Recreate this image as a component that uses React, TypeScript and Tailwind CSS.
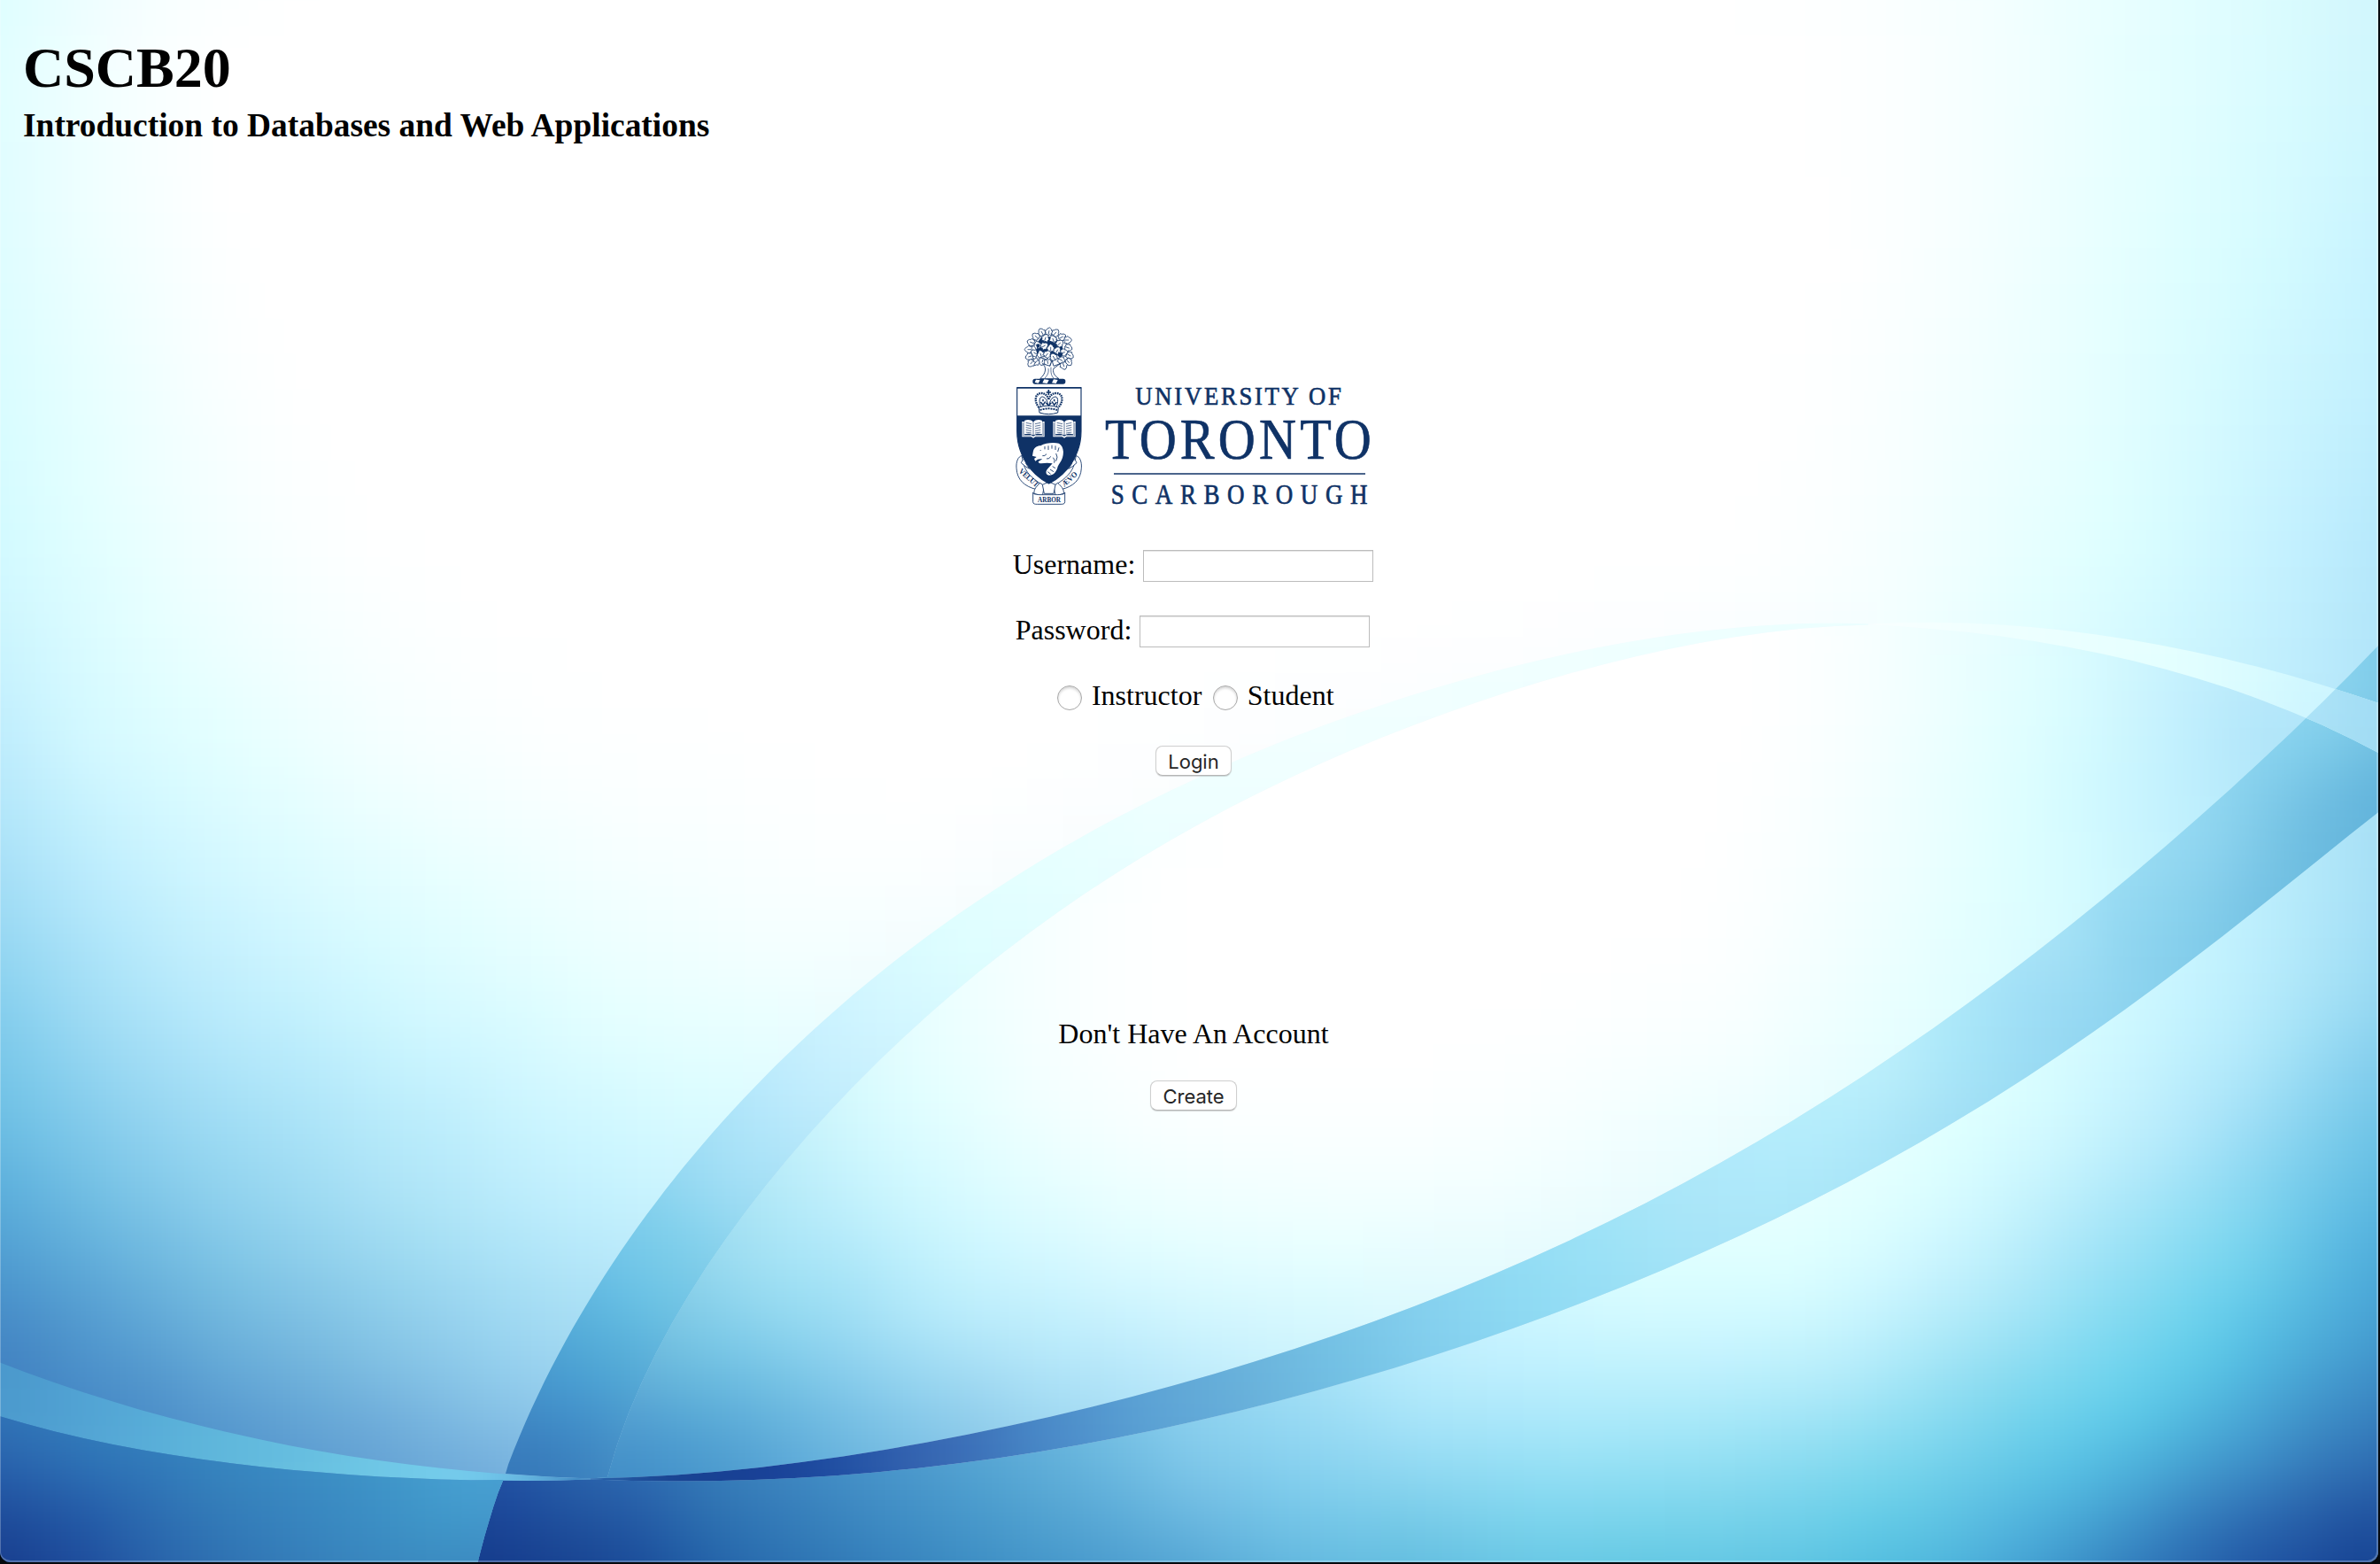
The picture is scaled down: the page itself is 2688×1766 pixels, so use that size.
import React from 'react';

type Pt = [number, number];
type Sample = [number, number, string];

const CELL = 40;

/* ---------- linear solver shared by the curve and colour fits ---------- */

function solve(m: number[][], rhs: number[][]): number[][] {
  const n = m.length;
  const width = rhs[0].length;
  for (let i = 0; i < n; i++) {
    let best = i;
    for (let r = i + 1; r < n; r++) if (Math.abs(m[r][i]) > Math.abs(m[best][i])) best = r;
    [m[i], m[best]] = [m[best], m[i]];
    [rhs[i], rhs[best]] = [rhs[best], rhs[i]];
    for (let r = 0; r < n; r++) {
      if (r === i) continue;
      const f = m[r][i] / m[i][i];
      if (!f) continue;
      for (let c = i; c < n; c++) m[r][c] -= f * m[i][c];
      for (let c = 0; c < width; c++) rhs[r][c] -= f * rhs[i][c];
    }
  }
  return rhs.map((r, i) => r.map((v) => v / m[i][i]));
}

/* Least-squares polynomial through the points, resampled evenly */
function fair(p: Pt[], degree: number, count = 48): Pt[] {
  const t = [0];
  for (let i = 1; i < p.length; i++) t.push(t[i - 1] + Math.hypot(p[i][0] - p[i - 1][0], p[i][1] - p[i - 1][1]));
  const u = t.map((v) => (2 * v) / t[t.length - 1] - 1);
  const n = degree + 1;
  const m = Array.from({ length: n }, () => Array(n).fill(0) as number[]);
  const rhs = Array.from({ length: n }, () => [0, 0]);
  p.forEach((q, k) => {
    const w = k === 0 || k === p.length - 1 ? 60 : 1;
    for (let i = 0; i < n; i++) {
      for (let j = 0; j < n; j++) m[i][j] += w * u[k] ** (i + j);
      rhs[i][0] += w * u[k] ** i * q[0];
      rhs[i][1] += w * u[k] ** i * q[1];
    }
  });
  const c = solve(m, rhs);
  return Array.from({ length: count + 1 }, (_, k) => {
    const v = (2 * k) / count - 1;
    return [c.reduce((s, a, i) => s + a[0] * v ** i, 0), c.reduce((s, a, i) => s + a[1] * v ** i, 0)] as Pt;
  });
}

/* ---------- curves shared by the wallpaper regions ---------- */

const arcOuter = fair(
  [
    [535, 1784], [540.5, 1764], [548, 1737], [558, 1703], [570.5, 1664], [590, 1613], [620, 1547], [650, 1493], [680, 1443], [727, 1375],
    [767, 1327], [807, 1278], [847, 1235], [882, 1200], [960, 1125], [1050, 1052], [1140, 990], [1240, 935], [1343, 886],
    [1430, 848], [1515, 813], [1601, 781], [1687, 756], [1773, 736], [1858, 722], [1944, 712], [2030, 706], [2110, 704.5],
  ],
  6,
  120,
);
const arcInner = fair(
  [
    [686, 1668], [690, 1657], [703, 1613], [723, 1563], [750, 1510], [783, 1453], [820, 1400], [860, 1347], [893, 1303],
    [940, 1252], [992, 1200], [1029, 1163], [1123, 1082], [1200, 1025], [1344, 937], [1473, 872], [1601, 817], [1730, 772],
    [1858, 738], [1987, 716], [2050, 709], [2110, 705.5],
  ],
  6,
);
const rightUpper = fair([[2110, 704.5], [2244, 705], [2330, 711], [2415, 724], [2501, 741], [2587, 763], [2690, 795]], 3, 16);
const rightLower = fair([[2110, 705.5], [2201, 711], [2287, 722], [2373, 739], [2458, 760], [2544, 786], [2612, 813], [2690, 852]], 3, 16);
const sweepUpper = fair(
  [
    [667, 1669.5], [790, 1662], [893, 1652], [1000, 1637], [1075, 1624], [1150, 1609], [1265, 1582], [1341, 1560], [1418, 1537],
    [1483, 1515], [1533, 1498], [1609, 1470], [1686, 1438], [1750, 1410], [1901, 1338], [2055, 1249], [2130, 1200], [2201, 1148],
    [2330, 1048], [2415, 979], [2501, 908], [2608, 811], [2655, 763], [2690, 725],
  ],
  6,
);
const sweepLower = fair(
  [
    [667, 1670.5], [733, 1673], [833, 1672], [1000, 1661], [1075, 1653], [1150, 1643], [1265, 1623], [1341, 1606], [1418, 1588],
    [1494, 1568], [1571, 1547], [1648, 1523], [1750, 1485], [1815, 1459], [1944, 1403], [2073, 1340], [2160, 1296], [2240, 1249],
    [2373, 1160], [2458, 1096], [2544, 1029], [2630, 963], [2690, 914],
  ],
  6,
);
const tailUpper = fair([[-4, 1537], [86, 1570], [171, 1595], [257, 1617], [343, 1635], [429, 1650], [500, 1658], [571, 1664], [667, 1669.5]], 4, 20);
const tailLower = fair([[-4, 1598], [86, 1622], [171, 1639], [257, 1652], [343, 1661], [429, 1667], [514, 1671], [600, 1672], [667, 1670.5]], 4, 20);

const rev = (p: Pt[]): Pt[] => [...p].reverse();
const outline = (...parts: Pt[][]) => `M${parts.flat().map(([x, y]) => `${x.toFixed(1)} ${y.toFixed(1)}`).join(' L')} Z`;

/* ---------- smooth colour fields ---------- */

function field(samples: Sample[], smooth: number) {
  const n = samples.length;
  const m = samples.map((a, i) => [...samples.map((b, j) => (i === j ? -smooth : Math.hypot(a[0] - b[0], a[1] - b[1]))), 1]);
  m.push([...samples.map(() => 1), 0]);
  const rhs = samples.map((s) => [1, 3, 5].map((k) => parseInt(s[2].slice(k, k + 2), 16)));
  rhs.push([0, 0, 0]);
  const w = solve(m, rhs);
  return (x: number, y: number) => {
    const c = [...w[n]];
    for (let i = 0; i < n; i++) {
      const r = Math.hypot(x - samples[i][0], y - samples[i][1]);
      for (let k = 0; k < 3; k++) c[k] += w[i][k] * r;
    }
    return `rgb(${c.map((v) => Math.max(0, Math.min(255, Math.round(v)))).join(',')})`;
  };
}

type Region = {
  id: string;
  path: string;
  within?: string;
  box: [number, number, number, number];
  samples: Sample[];
  smooth: number;
};

const gleam = outline(rightUpper, rev(rightLower));

const regions: Region[] = [
  {
    id: 'sky',
    path: 'M0 0H2688V1766H0Z',
    box: [0, 0, 2688, 1700],
    smooth: 30,
    samples: [
      [0, 0, '#dcfdff'], [60, 60, '#ebffff'], [150, 60, '#f8feff'], [260, 60, '#ffffff'], [0, 200, '#dffdff'], [100, 250, '#efffff'],
      [240, 250, '#feffff'], [0, 400, '#dafdff'], [100, 400, '#e8ffff'], [250, 400, '#fbffff'], [0, 600, '#d3fbff'], [100, 600, '#e2ffff'],
      [250, 600, '#f5ffff'], [400, 600, '#feffff'], [600, 500, '#ffffff'], [800, 200, '#ffffff'], [1300, 100, '#ffffff'], [1300, 500, '#ffffff'],
      [1800, 100, '#ffffff'], [1800, 500, '#ffffff'], [900, 800, '#ffffff'], [1344, 800, '#ffffff'], [1600, 700, '#ffffff'], [1800, 650, '#ffffff'],
      [1150, 850, '#ffffff'], [1100, 700, '#ffffff'], [1400, 650, '#ffffff'], [700, 700, '#ffffff'], [1600, 300, '#ffffff'], [1950, 650, '#feffff'],
      [0, 850, '#bcebfd'], [100, 850, '#d3f9ff'], [250, 850, '#e2ffff'], [450, 850, '#f5ffff'], [650, 850, '#fdffff'],
      [0, 1000, '#a2dcf5'], [100, 1000, '#b9ebfd'], [250, 1000, '#d0f6ff'], [500, 1000, '#e6ffff'], [800, 950, '#f9ffff'], [1000, 950, '#feffff'],
      [0, 1150, '#80ccec'], [100, 1150, '#a0dcf4'], [250, 1150, '#baebfc'], [450, 1150, '#d0f8ff'], [700, 1150, '#e6ffff'], [900, 1080, '#f4ffff'],
      [0, 1250, '#70c2e6'], [150, 1250, '#93d4f0'], [340, 1250, '#ace4f8'], [510, 1250, '#c0effd'], [690, 1250, '#d3f9ff'], [820, 1240, '#dcfdff'],
      [0, 1350, '#5aaedb'], [100, 1350, '#72bfe4'], [250, 1350, '#90d2ee'], [430, 1350, '#ace2f6'], [600, 1350, '#bfeefd'], [720, 1350, '#c8f3ff'],
      [0, 1450, '#4a96cc'], [100, 1450, '#5ba6d6'], [250, 1450, '#78c0e2'], [430, 1450, '#92d2ec'], [600, 1450, '#a8e0f5'],
      [0, 1530, '#427fc0'], [100, 1530, '#4f95cd'], [250, 1540, '#66abd8'], [430, 1550, '#80bfe3'], [600, 1550, '#98d2ef'],
      [170, 1580, '#4d8fc8'], [300, 1610, '#5b9cd0'], [430, 1620, '#69a7d6'], [550, 1600, '#85c1e6'], [560, 1650, '#72addb'],
      [2100, 60, '#feffff'], [2240, 80, '#f5ffff'], [2400, 80, '#e6ffff'], [2570, 80, '#dafcff'], [2680, 30, '#d0f6fc'],
      [2100, 300, '#feffff'], [2250, 300, '#f3ffff'], [2400, 300, '#e4ffff'], [2570, 300, '#d4fbff'], [2687, 300, '#c6f2ff'],
      [2050, 600, '#fcffff'], [2250, 600, '#ebffff'], [2400, 600, '#deffff'], [2500, 600, '#d0f8ff'], [2600, 600, '#c3f0ff'], [2687, 600, '#b5e8fb'],
      [2150, 690, '#f4ffff'], [2300, 690, '#e2ffff'], [2450, 700, '#d0f8ff'], [2600, 700, '#c0eefe'], [2687, 720, '#b0e4f8'],
    ],
  },
  {
    id: 'depth',
    path: outline(rev(arcOuter.filter((q) => q[1] >= 1673)).reverse(), [[568.5, 1671]], tailLower.filter((q) => q[0] > 575), sweepLower, [[2690, 1784]]),
    box: [520, 900, 2688, 1766],
    smooth: 45,
    samples: [
      [580, 1690, '#1c4ca3'], [560, 1760, '#163a88'], [650, 1760, '#1a4390'], [650, 1685, '#2862a9'], [720, 1700, '#265fab'], [720, 1760, '#1a4a98'],
      [800, 1690, '#3379b5'], [800, 1750, '#2566ab'], [950, 1690, '#3f8cc4'], [950, 1755, '#337ab8'], [1100, 1680, '#4da0d0'], [1100, 1755, '#4090c5'],
      [1250, 1650, '#6bb9df'], [1250, 1700, '#5eaeda'], [1250, 1760, '#4c9dce'], [1344, 1630, '#88ceed'], [1344, 1700, '#72bee4'], [1344, 1760, '#56a6d4'],
      [1601, 1583, '#b2e9fb'], [1515, 1617, '#98daf3'], [1601, 1650, '#95dbf4'], [1473, 1700, '#7acbec'], [1730, 1700, '#80d8f0'], [1601, 1750, '#65c0e0'],
      [1858, 1750, '#66cce4'], [2115, 1733, '#5bc9e5'], [2201, 1760, '#52b8de'], [2287, 1750, '#4aa8d8'], [2373, 1750, '#3b8cc5'], [2458, 1743, '#2f70b5'],
      [2544, 1743, '#2357a6'], [2664, 1750, '#17408f'], [2664, 1700, '#2458a5'], [2544, 1700, '#3478b9'], [2415, 1700, '#45a0d2'], [2330, 1667, '#55c4e5'],
      [2664, 1650, '#3373b6'], [2544, 1633, '#449cd0'], [2415, 1600, '#5acbe9'], [2664, 1567, '#4090c8'], [2664, 1500, '#48a5d5'], [2527, 1500, '#5cc5e8'],
      [2493, 1533, '#5ccce9'], [2664, 1417, '#50b0de'], [2544, 1433, '#70d3ec'], [2664, 1333, '#65c0e4'], [2664, 1267, '#75c9ea'], [2458, 1283, '#b5e9fb'],
      [2544, 1283, '#98daf4'], [2330, 1283, '#d0f8ff'], [2373, 1383, '#a8e4f8'], [2201, 1350, '#d8fdff'], [2201, 1417, '#caf4ff'], [2073, 1383, '#e2ffff'],
      [2030, 1450, '#daffff'], [1858, 1483, '#d5fbff'], [2115, 1483, '#c8f4ff'], [2287, 1483, '#a5e4f7'], [2415, 1467, '#84d9f0'], [1944, 1533, '#c5f2ff'],
      [1687, 1533, '#c3f0fe'], [1773, 1583, '#b3ebfc'], [2073, 1567, '#b2eaf9'], [2244, 1550, '#90dcf0'], [2287, 1600, '#72d3ec'], [2030, 1633, '#92def3'],
      [1773, 1650, '#9ae1f6'], [2115, 1683, '#70d3ea'], [1858, 1700, '#80d8ef'], [2664, 952, '#a8e0f6'], [2664, 1015, '#aae2f7'], [2587, 1056, '#b5eafb'],
      [2664, 1118, '#a0def5'], [2544, 1118, '#bbeefc'], [2458, 1139, '#c5f3ff'], [2664, 1222, '#80cdec'], [2544, 1201, '#b0e8fa'], [2373, 1222, '#cdf7ff'],
      [2260, 1260, '#d8fdff'],
    ],
  },
  {
    id: 'lens',
    path: outline(arcInner, rightLower.filter((q) => q[0] <= 2608), [[2614, 814]], rev(sweepUpper.filter((q) => q[0] <= 2609))),
    box: [660, 700, 2640, 1680],
    smooth: 55,
    samples: [
      [1344, 1250, '#feffff'], [1600, 1250, '#feffff'], [1900, 1250, '#f0ffff'], [1344, 1417, '#e4ffff'], [1500, 1417, '#eaffff'], [1700, 1350, '#f2ffff'],
      [1344, 1500, '#cdf4ff'], [1344, 1545, '#bdebfb'], [1500, 1470, '#d8fbff'], [1200, 1250, '#f5ffff'], [1100, 1250, '#e8ffff'], [986, 1283, '#d5fbff'],
      [1114, 1383, '#d5f9ff'], [1286, 1383, '#e8ffff'], [943, 1383, '#b9ecfc'], [857, 1450, '#9fdff3'], [1029, 1483, '#b4eafb'], [1200, 1517, '#bdedfd'],
      [814, 1517, '#7ccbe8'], [943, 1550, '#88cdec'], [1060, 1560, '#9cd8f2'], [767, 1533, '#70c2e0'], [833, 1567, '#68b9de'], [900, 1600, '#68b6de'],
      [986, 1617, '#74bde3'], [900, 1500, '#90d8f0'], [967, 1433, '#a9e5f7'], [750, 1560, '#66b6dc'], [720, 1600, '#539fd2'], [800, 1610, '#55a7d6'],
      [733, 1633, '#4695cb'], [823, 1650, '#4c99cd'], [690, 1663, '#3f88c3'], [1023, 1190, '#e4ffff'], [1200, 1060, '#f8ffff'], [1344, 960, '#feffff'],
      [1100, 1600, '#8fcae9'], [1250, 1560, '#aee2f7'], [1180, 1440, '#cdf6ff'], [1090, 1480, '#bdeffc'],
      [1200, 1170, '#f8ffff'], [1500, 1000, '#ffffff'], [1800, 800, '#ffffff'], [1850, 1000, '#ffffff'], [1600, 1150, '#ffffff'], [1344, 1120, '#ffffff'],
      [2000, 730, '#ffffff'], [2070, 724, '#fcffff'], [2158, 766, '#f2ffff'], [2330, 766, '#ddffff'], [2458, 787, '#c5f1fe'], [2544, 820, '#b2e6fa'],
      [2560, 849, '#aee3f8'], [2158, 890, '#eeffff'], [2330, 890, '#d5fcff'], [2441, 911, '#c3f2ff'], [2073, 1015, '#f5ffff'], [2244, 1015, '#e2ffff'],
      [2330, 1015, '#d8fdff'], [1944, 1097, '#fdffff'], [2158, 1097, '#e8ffff'], [2115, 1180, '#e8ffff'], [1944, 1180, '#f8ffff'], [1980, 900, '#feffff'],
    ],
  },
  {
    id: 'arc',
    path: outline(arcOuter.filter((q) => q[1] <= 1663), rev(arcInner), [[667, 1669.5], [620, 1667.5], [571, 1664]]),
    box: [560, 690, 2120, 1680],
    smooth: 5,
    samples: [
      [2030, 710, '#ecffff'], [1770, 750, '#f0ffff'], [1600, 800, '#f1ffff'], [1430, 870, '#f0ffff'], [1344, 910, '#eeffff'], [1200, 990, '#e6ffff'],
      [1080, 1080, '#defeff'], [1000, 1150, '#d2f6ff'], [940, 1200, '#c8f0fe'], [890, 1250, '#bbeafc'], [850, 1290, '#ade4f9'], [820, 1330, '#a2def5'],
      [800, 1365, '#94d9f2'], [775, 1400, '#80cfeb'], [740, 1410, '#78cbe9'], [707, 1450, '#6cc3e8'], [745, 1460, '#70c6e6'], [700, 1500, '#5cb4dc'],
      [667, 1533, '#50a9d6'], [650, 1583, '#4596cf'], [617, 1617, '#3f88c4'], [600, 1650, '#3576b8'], [667, 1650, '#3d85c0'],
    ],
  },
  {
    id: 'sweep',
    path: outline(sweepUpper, rev(sweepLower)),
    box: [660, 720, 2688, 1680],
    smooth: 5,
    samples: [
      [680, 1670, '#2a66ae'], [740, 1668, '#18428f'], [860, 1664, '#173d94'], [950, 1655, '#2050a4'], [1030, 1642, '#3563b0'], [1100, 1632, '#3c70b9'],
      [1160, 1625, '#4685c5'], [1290, 1595, '#5ba2d5'], [1400, 1567, '#68b0da'], [1515, 1530, '#74c2e5'], [1600, 1500, '#83ceed'], [1700, 1460, '#8edaf3'],
      [1800, 1420, '#9ae1f6'], [1900, 1380, '#a9e5f8'], [2000, 1310, '#b2ebfb'], [2100, 1250, '#b5edfb'], [2170, 1270, '#a5e2f6'], [2200, 1180, '#abe8f9'],
      [2130, 1200, '#bff0fc'], [2300, 1120, '#9ddcf5'], [2400, 1060, '#8fd6f0'], [2330, 1070, '#a8e3f7'], [2500, 960, '#90d5f0'], [2540, 1010, '#78c5e5'],
      [2600, 930, '#70bfe2'], [2600, 840, '#84d0ed'], [2640, 860, '#76c5e5'], [2680, 890, '#62b3db'], [2680, 750, '#80cdea'], [2660, 775, '#8bd3ee'],
    ],
  },
  {
    id: 'tail',
    path: outline(tailUpper, rev(tailLower)),
    box: [0, 1530, 690, 1680],
    smooth: 2,
    samples: [
      [0, 1570, '#4a98cc'], [100, 1600, '#52a4d4'], [171, 1620, '#58add8'], [250, 1640, '#60b8dc'], [343, 1650, '#66bfe0'], [430, 1662, '#70c8e6'],
      [530, 1668, '#78cfef'], [610, 1670, '#62b2de'], [670, 1670, '#3478b8'],
    ],
  },
  {
    id: 'pool',
    path: outline(tailLower.filter((q) => q[0] <= 565), [[568.5, 1671]], rev(arcOuter.filter((q) => q[1] >= 1673)), [[-4, 1784]]),
    box: [0, 1590, 580, 1766],
    smooth: 5,
    samples: [
      [0, 1620, '#2f70b5'], [100, 1640, '#3078b8'], [257, 1665, '#3684be'], [400, 1675, '#3d90c5'], [540, 1680, '#48a0d2'], [0, 1680, '#2357a6'],
      [0, 1760, '#173c8c'], [100, 1700, '#265fab'], [100, 1760, '#1f4f9e'], [200, 1740, '#2d6db0'], [350, 1740, '#3783bd'], [500, 1720, '#3f98c9'],
      [530, 1760, '#3c8ac0'],
    ],
  },
  {
    id: 'gleam',
    path: gleam,
    box: [2100, 700, 2688, 860],
    smooth: 2,
    samples: [[2150, 707, '#f8ffff'], [2230, 709, '#f0ffff'], [2330, 725, '#eaffff'], [2458, 745, '#e4ffff'], [2550, 775, '#d8fbff'], [2610, 800, '#ccf5ff']],
  },
  {
    id: 'cross',
    path: gleam,
    within: 'sweep',
    box: [2600, 740, 2688, 860],
    smooth: 2,
    samples: [[2620, 800, '#ade3f7'], [2650, 805, '#a5def5'], [2680, 830, '#a0dbf3']],
  },
];

// The painted fields depend only on constants, so they are built once.
const painted = regions.map((r) => {
  const at = field(r.samples, r.smooth);
  const cells: { x: number; y: number; fill: string }[] = [];
  for (let y = r.box[1] - 2 * CELL; y < r.box[3] + 2 * CELL; y += CELL)
    for (let x = r.box[0] - 2 * CELL; x < r.box[2] + 2 * CELL; x += CELL)
      cells.push({ x, y, fill: at(x + CELL / 2, y + CELL / 2) });
  return { ...r, cells };
});

function Wallpaper() {
  return (
    <svg className="absolute inset-0" width="2686" height="1764" viewBox="0 0 2686 1764" aria-hidden="true">
      <defs>
        <filter id="melt" filterUnits="userSpaceOnUse" x="-60" y="-60" width="2810" height="1890" colorInterpolationFilters="sRGB">
          <feGaussianBlur stdDeviation="20" />
        </filter>
        {painted.map((r) => (
          <clipPath id={`clip-${r.id}`} key={r.id} clipPath={r.within && `url(#clip-${r.within})`}>
            <path d={r.path} />
          </clipPath>
        ))}
      </defs>
      {painted.map((r) => (
        <g key={r.id} clipPath={`url(#clip-${r.id})`}>
          <g filter="url(#melt)">
            {r.cells.map((c) => (
              <rect key={`${c.x}-${c.y}`} x={c.x} y={c.y} width={CELL + 1} height={CELL + 1} fill={c.fill} />
            ))}
          </g>
        </g>
      ))}
    </svg>
  );
}

/* ---------- crest ---------- */

const NAVY = '#0f3266';

const leaves: [number, number, number][] = [
  [110, 46, -30], [134, 44, 10], [156, 48, 40], [90, 60, -50], [178, 62, 60], [197, 72, 90], [74, 80, -70], [122, 66, 20],
  [148, 70, -20], [170, 84, 50], [199, 98, 110], [96, 90, -20], [66, 104, -90], [118, 92, 60], [184, 114, 80], [204, 124, 120],
  [86, 116, -60], [68, 128, -110], [140, 100, 0], [162, 108, 30], [106, 120, -20], [128, 120, 40], [150, 130, -30], [176, 140, 120],
  [200, 146, 140], [90, 146, -130], [112, 144, -160], [130, 148, 170], [184, 158, 160], [74, 150, -140],
];

function Leaf({ x, y, turn }: { x: number; y: number; turn: number }) {
  return (
    <path
      transform={`translate(${x} ${y}) rotate(${turn}) scale(1.12)`}
      d="M0 11 L-4 8 L-9 10 L-9 4 L-12 -1 L-8 -4 L-6 -9 L0 -13 L6 -9 L8 -4 L12 -1 L9 4 L9 10 L4 8 Z M0 8 V-4"
      fill="#fff"
      stroke={NAVY}
      strokeWidth="2"
      strokeLinejoin="round"
    />
  );
}

function Book({ x }: { x: number }) {
  return (
    <g transform={`translate(${x} 340)`}>
      <path d="M1 8 H8 V54 H32 L39 58 L46 54 H70 V8 H77 V60 H45 L39 64 L33 60 H1 Z" fill="#fff" />
      <path d="M9 5 C20 0 32 2 38 9 V54 C30 49 20 48 9 51 Z M69 5 C58 0 46 2 40 9 V54 C48 49 58 48 69 51 Z" fill="#fff" />
      <path
        d="M14 12 L33 16 M14 20 L33 24 M14 28 L33 32 M14 36 L33 40 M14 44 L33 47 M64 12 L45 16 M64 20 L45 24 M64 28 L45 32 M64 36 L45 40 M64 44 L45 47"
        stroke={NAVY}
        strokeWidth="2"
        fill="none"
      />
      <path d="M4 12 V56 H31 M74 12 V56 H47" stroke={NAVY} strokeWidth="1.4" fill="none" />
    </g>
  );
}

function Crest() {
  return (
    <g transform="translate(30 30)">
      {/* oak */}
      <path d="M108 62 L148 60 L180 84 L180 118 L150 128 L110 126 L92 112 L90 88 Z" fill={NAVY} />
      {leaves.map(([x, y, turn]) => (
        <Leaf key={`${x}-${y}`} x={x} y={y} turn={turn} />
      ))}
      <path d="M90 88 l10 -4 l4 10 l-10 6 Z M136 74 l14 4 l-8 10 Z M166 112 l16 6 l-8 14 l-10 -6 Z M90 104 l12 6 l-8 10 Z" fill={NAVY} />
      <path
        d="M112 152 C126 162 126 184 104 203 H168 C150 192 146 178 150 168 L172 152 L150 160 L144 140 L138 160 Z"
        fill="#fff"
        stroke={NAVY}
        strokeWidth="2.6"
      />
      <path d="M132 168 C134 182 130 190 120 201 M141 164 C140 184 142 192 150 201" stroke={NAVY} strokeWidth="2" fill="none" />
      {/* wreath */}
      <rect x="79" y="203" width="111" height="18" rx="8" fill={NAVY} />
      <path d="M90 206 L104 208 L98 218 L86 215 Z M118 205 L134 207 L128 219 L112 217 Z M150 205 L164 207 L158 219 L144 217 Z" fill="#fff" />
      {/* scroll */}
      <g fill="#fff" stroke={NAVY} strokeWidth="2.6" strokeLinejoin="round">
        <path d="M42 464 C30 466 22 484 24 506 C26 546 52 568 92 578 L102 592 L108 560 C76 540 56 520 48 492 Z" />
        <path d="M40 488 C44 476 54 470 62 474 L56 490 L68 508 L54 500 Z" />
        <path d="M226 464 C238 466 246 484 244 506 C242 546 216 568 176 578 L166 592 L160 560 C192 540 212 520 220 492 Z" />
        <path d="M228 488 C224 476 214 470 206 474 L212 490 L200 508 L214 500 Z" />
        <path d="M104 556 C94 566 82 576 84 592 L112 600 L118 566 Z" />
        <path d="M164 556 C174 566 186 576 184 592 L156 600 L150 566 Z" />
        <path d="M112 562 L118 592 H150 L156 562 L134 552 Z" />
        <path d="M80 588 C80 594 90 596 112 596 H156 C178 596 188 594 188 588 V620 C188 628 180 628 174 628 H94 C88 628 80 628 80 620 Z" />
      </g>
      <g fill={NAVY} fontFamily="'Liberation Serif', serif" fontWeight="bold">
        <text x="96" y="622" fontSize="25" textLength="78" lengthAdjust="spacingAndGlyphs">ARBOR</text>
        <text transform="translate(31 518) rotate(42)" fontSize="26" textLength="80" lengthAdjust="spacingAndGlyphs">VELUT</text>
        <text transform="translate(186 570) rotate(-42)" fontSize="26" textLength="62" lengthAdjust="spacingAndGlyphs">ÆVO</text>
      </g>
      {/* shield */}
      <path d="M26 234 H243 V380 C243 456 200 524 134 558 C68 524 26 456 26 380 Z" fill="#fff" stroke={NAVY} strokeWidth="3.4" />
      <path d="M25 233 H244" stroke={NAVY} strokeWidth="4.5" />
      <path d="M26 328 H243 V380 C243 456 200 524 134 558 C68 524 26 456 26 380 Z" fill={NAVY} />
      {/* crown */}
      <g stroke={NAVY} strokeWidth="3" fill="none">
        <path d="M100 300 C82 278 88 252 108 252 C122 252 130 262 133 274 C136 262 144 252 160 252 C180 252 186 278 166 300" strokeDasharray="5 2.5" strokeWidth="7" />
        <path d="M108 300 C98 280 102 264 112 264 C124 266 130 280 131 296 M158 300 C168 280 164 264 156 264 C142 266 136 280 135 296" />
        <path d="M133 240 V258 M125 249 H141" strokeWidth="5" />
        <path d="M100 300 Q133 288 166 300 L164 318 Q133 328 102 318 Z" fill="#fff" />
        <path d="M104 309 Q133 299 162 309" strokeDasharray="6 3" strokeWidth="6" />
        <path d="M106 282 l8 10 l8 -12 M144 280 l8 12 l8 -10 M124 284 l9 10 l9 -10 M114 272 v8 M152 272 v8" strokeWidth="4.5" />
      </g>
      <Book x={42} />
      <Book x={147} />
      {/* beaver */}
      <path
        d="M80 452 C82 438 92 430 106 430 C122 420 150 418 168 422 C182 430 186 450 180 470 C176 484 168 490 164 500 C160 518 150 530 134 530 C122 528 122 516 130 508 L146 490 L128 488 L108 490 C98 490 94 484 104 480 L112 474 L96 476 L88 482 L84 474 L92 468 L78 464 Z"
        fill="#fff"
      />
      <path
        d="M104 444 l3 3 M120 432 v10 M132 430 v14 M144 428 v12 M156 430 v14 M168 436 l-4 14 M112 464 q8 2 14 -6 M126 474 q10 2 14 -8 M148 470 q8 8 4 18 M138 510 l12 8 M130 518 l10 8 M146 500 l10 6 M158 456 q8 12 0 26"
        stroke={NAVY}
        strokeWidth="2.6"
        fill="none"
      />
    </g>
  );
}

function Logo() {
  return (
    <svg
      className="mt-[186px] h-[240px] w-[412px] shrink-0 overflow-visible"
      viewBox="36 0 1236 720"
      role="img"
      aria-label="University of Toronto Scarborough"
    >
      <Crest />
      <g fill={NAVY} stroke={NAVY} fontFamily="'Liberation Serif', serif">
        <text transform="translate(457 320) scale(.92 1)" fontSize="87" strokeWidth="2" textLength="758" lengthAdjust="spacing">UNIVERSITY OF</text>
        <text transform="translate(354 503) scale(.9 1)" fontSize="194" strokeWidth="2" textLength="1003" lengthAdjust="spacing">TORONTO</text>
        <text transform="translate(374 656) scale(.88 1)" fontSize="92" strokeWidth="2" textLength="988" lengthAdjust="spacing">SCARBOROUGH</text>
      </g>
      <path d="M384 555 H1236" stroke={NAVY} strokeWidth="4.5" />
    </svg>
  );
}

function Field({ label, type, className }: { label: string; type: string; className: string }) {
  return (
    <div className={`flex h-[38px] items-start ${className}`}>
      <label className="pr-[7px] pl-px text-[32px] leading-[36px]">{label}</label>
      <input
        type={type}
        aria-label={label}
        className="mx-[2px] mt-[2px] h-9 w-[260px] rounded-none border border-[#bcbcbc] bg-white shadow-[inset_0_2px_1px_-1px_#e4e4e4] outline-none"
      />
    </div>
  );
}

function Radio({ label }: { label: string }) {
  return (
    <label className="flex items-start text-[32px] leading-[36px]">
      <span className="mt-[7px] mr-[10.5px] size-7 rounded-full border border-[#a8a8a8] bg-white shadow-[inset_0_2px_3px_#d4d4d4]" />
      {label}
    </label>
  );
}

function PushButton({ label, className }: { label: string; className: string }) {
  return (
    <button
      type="button"
      className={`${className} h-[34px] shrink-0 rounded-[8px] border border-[#cfcfcf] border-b-[#b5b5b5] bg-white pt-px font-['Inter','Liberation_Sans',sans-serif] leading-[33px] text-[#262626] shadow-[0_1px_1px_rgba(0,0,0,0.16)]`}
    >
      {label}
    </button>
  );
}

export default function App() {
  return (
    <div className="h-[1766px] w-[2688px] overflow-hidden bg-[#05090e]">
      <div className="relative h-[1764px] w-[2686px] overflow-hidden rounded-b-[12px] font-['Liberation_Serif','Times_New_Roman',serif] text-black">
        <Wallpaper />
        <main className="relative flex h-full flex-col items-center pt-[41px] pr-4 pl-[26px]">
          <header className="self-start">
            <h1 className="text-[64px] leading-[72px] font-bold">CSCB20</h1>
            <h3 className="mt-[7px] text-[37.44px] leading-[44px] font-bold whitespace-nowrap">Introduction to Databases and Web Applications</h3>
          </header>
          <Logo />
          <form className="mt-[29px] flex flex-col items-center">
            <Field label="Username:" type="text" className="" />
            <Field label="Password:" type="password" className="mt-9 pr-px" />
            <div className="mt-9 flex h-[38px] gap-[13px] pl-[5px]">
              <Radio label="Instructor" />
              <Radio label="Student" />
            </div>
            <PushButton label="Login" className="mt-[37px] w-[86px] text-[22px]" />
          </form>
          <p className="mt-[273px] text-[32px] leading-[36px]">Don't Have An Account</p>
          <PushButton label="Create" className="mt-[35px] w-[98px] text-[22px]" />
        </main>
        <div className="pointer-events-none absolute inset-0 rounded-b-[12px] border-r-2 border-b-2 border-l border-white/25" />
      </div>
    </div>
  );
}
